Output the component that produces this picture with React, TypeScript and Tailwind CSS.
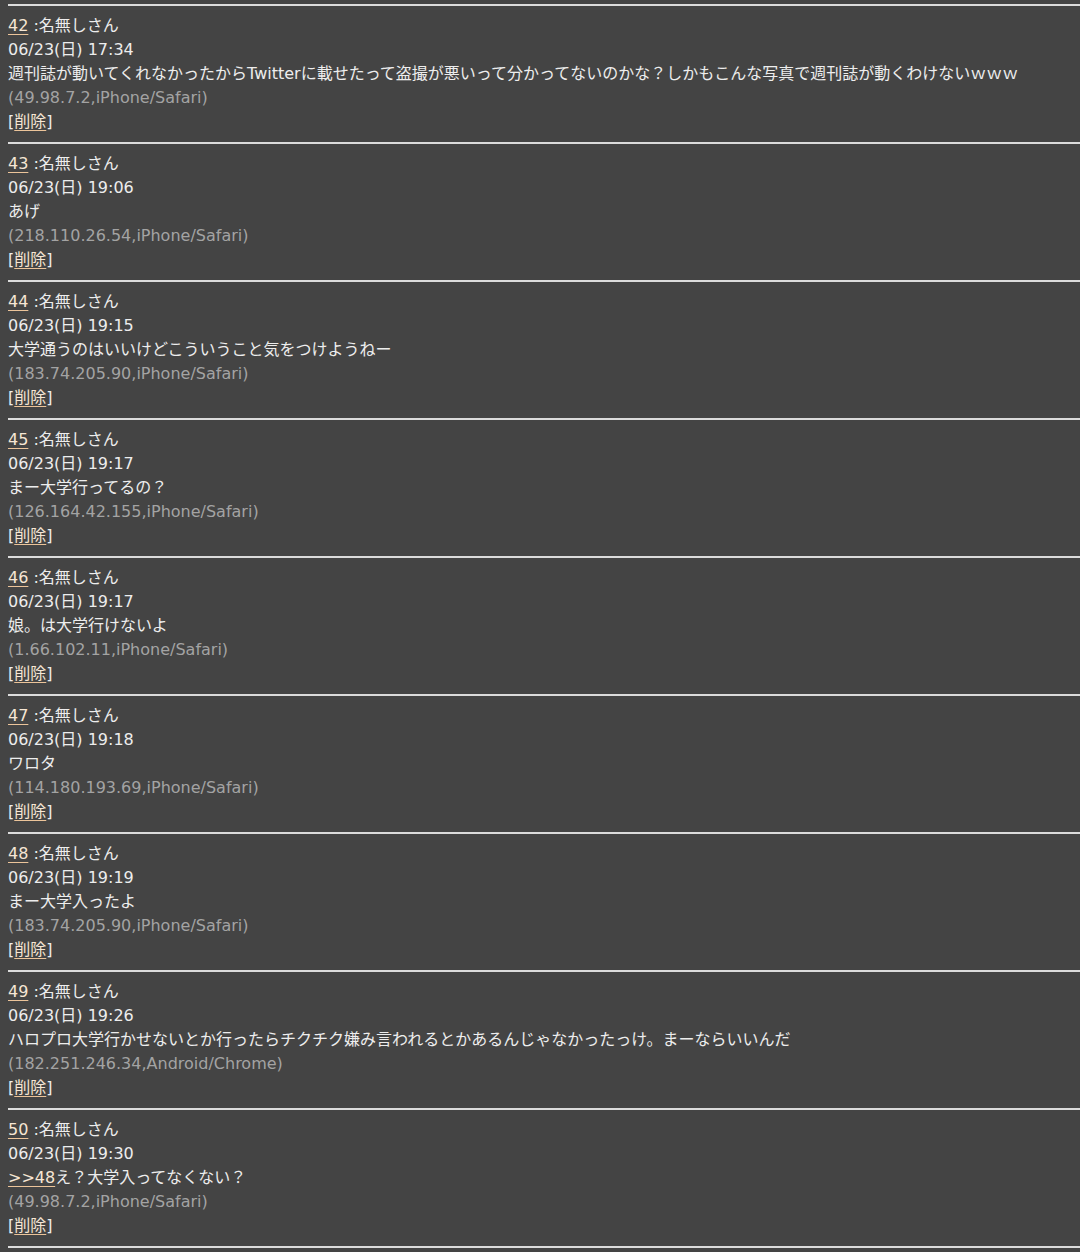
const posts = [
  { no: 42, date: "06/23(日) 17:34", body: "週刊誌が動いてくれなかったからTwitterに載せたって盗撮が悪いって分かってないのかな？しかもこんな写真で週刊誌が動くわけないｗｗｗ", host: "(49.98.7.2,iPhone/Safari)" },
  { no: 43, date: "06/23(日) 19:06", body: "あげ", host: "(218.110.26.54,iPhone/Safari)" },
  { no: 44, date: "06/23(日) 19:15", body: "大学通うのはいいけどこういうこと気をつけようねー", host: "(183.74.205.90,iPhone/Safari)" },
  { no: 45, date: "06/23(日) 19:17", body: "まー大学行ってるの？", host: "(126.164.42.155,iPhone/Safari)" },
  { no: 46, date: "06/23(日) 19:17", body: "娘。は大学行けないよ", host: "(1.66.102.11,iPhone/Safari)" },
  { no: 47, date: "06/23(日) 19:18", body: "ワロタ", host: "(114.180.193.69,iPhone/Safari)" },
  { no: 48, date: "06/23(日) 19:19", body: "まー大学入ったよ", host: "(183.74.205.90,iPhone/Safari)" },
  { no: 49, date: "06/23(日) 19:26", body: "ハロプロ大学行かせないとか行ったらチクチク嫌み言われるとかあるんじゃなかったっけ。まーならいいんだ", host: "(182.251.246.34,Android/Chrome)" },
  { no: 50, date: "06/23(日) 19:30", body: "え？大学入ってなくない？", anchor: ">>48", host: "(49.98.7.2,iPhone/Safari)" },
]

const linkCls = "text-[#f6e6d4] underline decoration-[#ecc49a] underline-offset-[3px]"

function Post({ post }: { post: (typeof posts)[number] }) {
  return (
    <div>
      <div className="ml-2 border-t-2 border-[#dcdcdc]" />
      <div className="pl-2 pt-2 pb-2">
        <div>
          <a href="#" className={linkCls}>{post.no}</a> :名無しさん
        </div>
        <div>{post.date}</div>
        <div>
          {post.anchor && <a href="#" className={linkCls}>{post.anchor}</a>}
          {post.body}
        </div>
        <div className="text-[#a3a3a3]">{post.host}</div>
        <div>
          [<a href="#" className={linkCls}>削除</a>]
        </div>
      </div>
    </div>
  )
}

export default function App() {
  return (
    <div className="min-h-screen bg-[#444444] pt-1 font-['DejaVu_Sans','Noto_Sans_CJK_JP',sans-serif] text-[16px] leading-6 text-[#ededed]">
      {posts.map((p) => (
        <Post key={p.no} post={p} />
      ))}
      <div className="ml-2 border-t-2 border-[#dcdcdc]" />
    </div>
  )
}
